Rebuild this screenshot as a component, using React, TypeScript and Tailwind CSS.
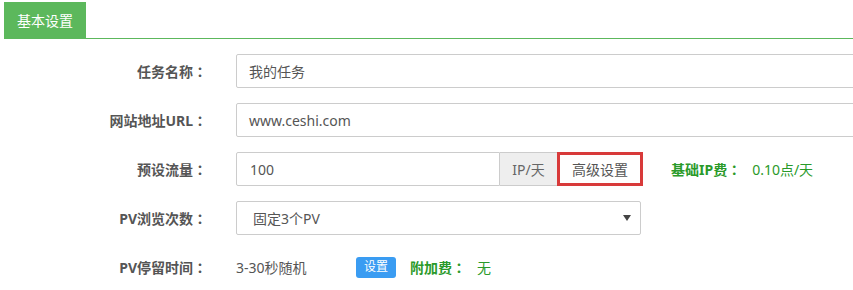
import React from 'react';

const font = { fontFamily: '"Noto Sans", "Noto Sans CJK SC", sans-serif' };

// full-width colon, centred in its cell like the reference font draws it
const Colon: React.FC = () => (
  <span style={{ fontFamily: '"Noto Sans CJK TC", sans-serif' }}>：</span>
);

const Label: React.FC<{ text: string }> = ({ text }) => (
  <div className="w-[207px] shrink-0 text-right text-[14px] font-bold text-[#555]">
    {text}
    <Colon />
  </div>
);

const App: React.FC = () => {
  return (
    <div className="w-[853px] h-[290px] overflow-hidden bg-white" style={font}>
      {/* tab header */}
      <div className="ml-[4px] pt-[2px] border-b border-[#5cb85c] flex">
        <div className="h-[36px] px-[13px] pt-[1px] flex items-center bg-[#5cb85c] text-white text-[14px]">
          基本设置
        </div>
      </div>

      <div className="pt-[15px] flex flex-col gap-[15px]">
        {/* 任务名称 */}
        <div className="flex items-center h-[34px]">
          <Label text="任务名称" />
          <div className="ml-[29px] w-[660px] shrink-0 h-[34px] border border-[#ccc] rounded-[2px] px-[12px] flex items-center text-[14px] text-[#555]">
            我的任务
          </div>
        </div>

        {/* 网站地址 */}
        <div className="flex items-center h-[34px]">
          <Label text="网站地址URL" />
          <div className="ml-[29px] w-[660px] shrink-0 h-[34px] border border-[#ccc] rounded-[2px] px-[12px] flex items-center text-[14px] text-[#555]">
            www.ceshi.com
          </div>
        </div>

        {/* 预设流量 */}
        <div className="flex items-center h-[34px]">
          <Label text="预设流量" />
          <div className="ml-[29px] flex h-[34px]">
            <div className="w-[264px] border border-[#ccc] rounded-l-[2px] px-[13px] flex items-center text-[14px] text-[#555]">
              100
            </div>
            <div className="w-[57px] border-y border-[#ccc] bg-[#eee] flex items-center justify-center text-[14px] text-[#666]">
              IP/天
            </div>
            <div className="w-[86px] border-[3px] border-[#d83a3a] bg-white flex items-center justify-center text-[14px] text-[#555]">
              高级设置
            </div>
          </div>
          <span className="ml-[28px] text-[14px] font-bold text-[#2a9a2a]">
            基础IP费<Colon />
          </span>
          <span className="ml-[11px] text-[14px] text-[#2a9a2a]">0.10点/天</span>
        </div>

        {/* PV浏览次数 */}
        <div className="flex items-center h-[34px]">
          <Label text="PV浏览次数" />
          <div className="ml-[29px] w-[405px] h-[34px] border border-[#ccc] rounded-[2px] pl-[16px] pr-[8px] flex items-center justify-between text-[14px] text-[#555]">
            <span>固定3个PV</span>
            <svg width="8" height="6" viewBox="0 0 8 6" className="mr-[1px]">
              <path d="M0 0 H8 L4 6 Z" fill="#444" />
            </svg>
          </div>
        </div>

        {/* PV停留时间 */}
        <div className="flex items-center h-[34px]">
          <Label text="PV停留时间" />
          <span className="ml-[29px] w-[120px] text-[14px] text-[#555]">3-30秒随机</span>
          <button className="w-[40px] h-[21px] rounded-[3px] bg-[#3a9cf2] text-white text-[12px] flex items-center justify-center">
            设置
          </button>
          <span className="ml-[14px] text-[14px] font-bold text-[#2a9a2a]">
            附加费<Colon />
          </span>
          <span className="ml-[11px] text-[14px] text-[#2a9a2a]">无</span>
        </div>
      </div>
    </div>
  );
};

export default App;
